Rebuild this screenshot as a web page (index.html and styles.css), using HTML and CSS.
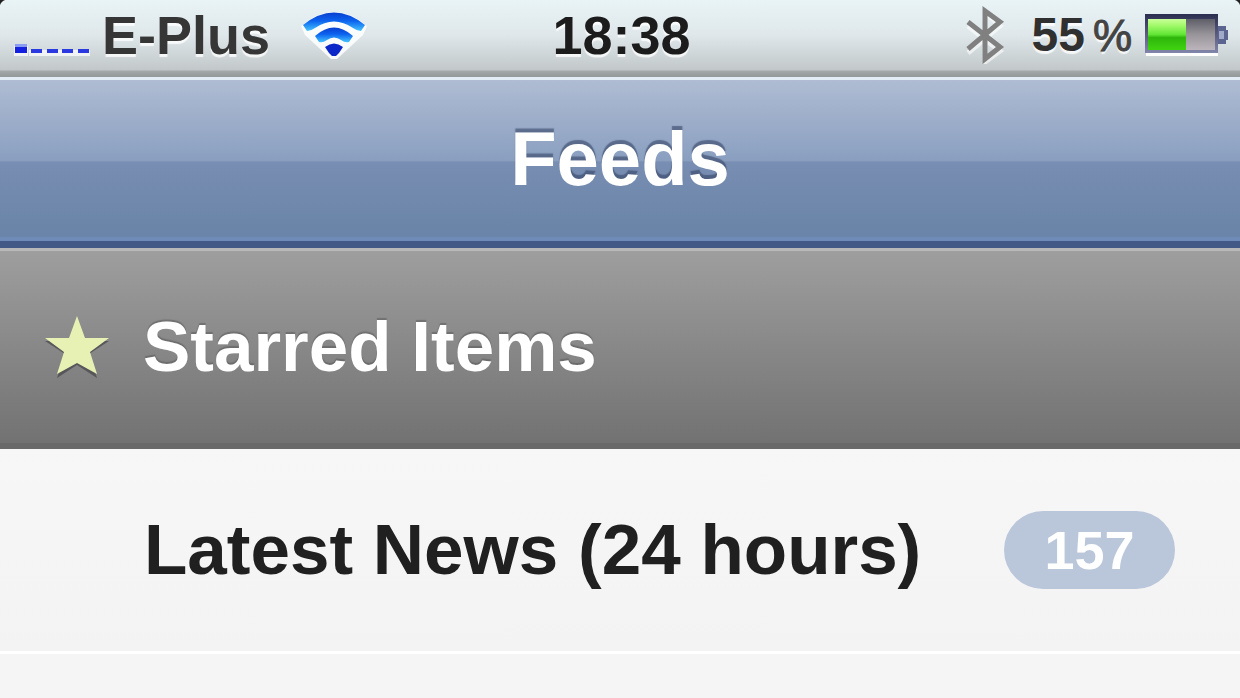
FILE: index.html
```html
<!DOCTYPE html>
<html lang="en">
<head>
    <meta charset="UTF-8">
    <meta name="viewport" content="width=device-width, initial-scale=1.0">
    <title>Feeds</title>
    <link rel="stylesheet" href="styles.css">
</head>
<body>
    <div class="status-bar">
        <div class="status-left">
            <svg class="signal" width="76" height="14" viewBox="0 0 76 14" aria-hidden="true">
                <path d="M0 4h14v10H0zM15 8h61v6H15z" fill="#fff" opacity=".7"/>
                <path d="M1 2h12v4H1z" fill="#8a9df0"/>
                <path d="M1 5h12v6H1z" fill="#1422e0"/>
                <path d="M17 7h11v4H17zM33 7h11v4H33zM48 7h11v4H48zM64 7h11v4H64z" fill="#2b3ae0"/>
            </svg>
            <span class="carrier">E-Plus</span>
            <svg class="wifi" width="66" height="48" viewBox="0 0 66 48" aria-hidden="true">
                <defs>
                    <linearGradient id="arc" x1="0" y1="0" x2="0" y2="1">
                        <stop offset="0" stop-color="#0a3fd0"/>
                        <stop offset=".45" stop-color="#0c62ee"/>
                        <stop offset="1" stop-color="#45c4ff"/>
                    </linearGradient>
                </defs>
                <path d="M0 15Q33-13 66 15L62 24L36 48H30L4 24z" fill="#fff" opacity=".85"/>
                <path d="M2 14Q33-11 64 14L60 20Q56 20 52 17Q33 4 14 17Q10 20 6 20z" fill="url(#arc)"/>
                <path d="M14 25Q33 8 52 25L48 31Q44 32 40 29Q33 24 26 29Q22 32 18 31z" fill="url(#arc)"/>
                <path d="M24 36Q33 29 42 36L38 42L35 45H31L28 42z" fill="#0b27c8"/>
            </svg>
        </div>
        <div class="clock">18:38</div>
        <div class="status-right">
            <svg class="bluetooth" width="40" height="58" viewBox="0 0 40 58" aria-hidden="true">
                <path d="M3 18L35 43L20 54V4L35 18L3 45" fill="none" stroke="#fff" stroke-width="5" opacity=".6" transform="translate(0 2)"/>
                <path d="M3 16L35 41L20 53V5L35 16L3 43" fill="none" stroke="#808080" stroke-width="5"/>
            </svg>
            <span class="charge">55<span class="percent">%</span></span>
            <svg class="battery" width="84" height="44" viewBox="0 0 84 44" aria-hidden="true">
                <defs>
                    <linearGradient id="full" x1="0" y1="0" x2="0" y2="1">
                        <stop offset="0" stop-color="#c9ff9a"/>
                        <stop offset=".2" stop-color="#a4fa6c"/>
                        <stop offset=".5" stop-color="#62e636"/>
                        <stop offset=".6" stop-color="#2fb50c"/>
                        <stop offset="1" stop-color="#3fd410"/>
                    </linearGradient>
                    <linearGradient id="empty" x1="0" y1="0" x2="0" y2="1">
                        <stop offset="0" stop-color="#5e5e68"/>
                        <stop offset=".5" stop-color="#98949a"/>
                        <stop offset="1" stop-color="#bcb6bc"/>
                    </linearGradient>
                    <linearGradient id="frame" x1="0" y1="0" x2="0" y2="1">
                        <stop offset="0" stop-color="#2c2e50"/>
                        <stop offset="1" stop-color="#8286aa"/>
                    </linearGradient>
                </defs>
                <path d="M1 40h72v3H1z" fill="#fff"/>
                <path d="M73 13h8v4h2v10h-2v4h-8z" fill="#5c6490"/>
                <path d="M74 18h5v8h-5z" fill="#a0a9c8"/>
                <path d="M0 1h73v39H0z" fill="url(#frame)"/>
                <path d="M3 6h38v31H3z" fill="url(#full)"/>
                <path d="M41 6h29v31H41z" fill="url(#empty)"/>
            </svg>
        </div>
    </div>

    <header class="nav-bar">
        <h1>Feeds</h1>
    </header>

    <ul class="feed-list">
        <li>
            <a class="row starred" href="#starred">
                <svg class="star" width="68" height="68" viewBox="0 0 68 68" aria-hidden="true">
                    <path d="M34 7L41 28H66L46 41L54 65L34 52L14 65L22 41L2 28H27z" fill="#4c4c50" opacity=".8"/>
                    <path d="M34 3L42 25H66L47 39L54 61L34 50L14 61L21 39L2 25H26z" fill="#e7f1b4"/>
                </svg>
                <span class="title">Starred Items</span>
            </a>
        </li>
        <li>
            <a class="row" href="#latest">
                <span class="title">Latest News (24 hours)</span>
                <span class="badge">157</span>
            </a>
        </li>
    </ul>
</body>
</html>
```

FILE: styles.css
```css
* {
    box-sizing: border-box;
}

body {
    margin: 0;
    min-height: 100vh;
    background: #f5f5f5;
    font-family: "Liberation Sans", Arial, sans-serif;
    font-weight: bold;
    color: #202020;
}

.status-bar {
    display: grid;
    grid-template-columns: 1fr auto 1fr;
    align-items: center;
    height: 80px;
    padding: 0 11px 10px 14px;
    background:
        radial-gradient(circle at 8px 8px, transparent 8px, #222 9px) 0 0 / 8px 8px no-repeat,
        radial-gradient(circle at 0 8px, transparent 8px, #222 9px) 100% 0 / 8px 8px no-repeat,
        linear-gradient(#e9f4f7 0, #dfe7ea 35px, #c2c8ca 70px, #a3a9a9 71px, #929998 77px, #e3edf5 77px, #e3edf5 80px);
    font-size: 54px;
    line-height: 60px;
    text-shadow: 0 3px 1px rgba(255, 255, 255, 0.8);
}

.status-left,
.status-right {
    display: flex;
    align-items: center;
}

.status-right {
    justify-content: flex-end;
}

.signal {
    margin-top: 28px;
    margin-right: 12px;
}

.carrier {
    color: #363636;
}

.wifi {
    margin-left: 31px;
}

.clock {
    color: #1c1c1c;
}

.bluetooth {
    margin-right: 26px;
}

.charge {
    display: flex;
    align-items: baseline;
    font-size: 48px;
    color: #303030;
}

.percent {
    margin: 0 13px 0 8px;
    font-size: 44px;
    font-weight: normal;
    color: #444;
    -webkit-text-stroke: 1px #444;
}

.nav-bar {
    display: flex;
    align-items: center;
    justify-content: center;
    height: 168px;
    padding-bottom: 4px;
    border-bottom: 7px solid #435a86;
    background: linear-gradient(#afbcd3, #8a9fc0 50%, #788eb2 51%, #6984a8 97%, #6f8cb9 98%);
}

.nav-bar h1 {
    margin: 0;
    font-size: 76px;
    line-height: 80px;
    color: #fff;
    text-shadow: 0 -4px 1px rgba(52, 66, 100, 0.6);
}

.feed-list {
    margin: 0;
    padding: 0;
    list-style: none;
}

.row {
    display: flex;
    align-items: center;
    height: 205px;
    padding: 0 65px 0 144px;
    border-bottom: 3px solid #fff;
    background: linear-gradient(#f7f7f7, #f3f3f3);
    color: inherit;
    text-decoration: none;
}

.title {
    flex: 1;
    font-size: 71px;
    line-height: 80px;
}

.starred {
    height: 201px;
    padding-left: 43px;
    border-top: 3px solid #b9b9b9;
    border-bottom: 6px solid #696969;
    background: linear-gradient(#9e9e9e, #727272);
    color: #fff;
    text-shadow: 0 -2px 1px rgba(70, 70, 70, 0.4);
}

.star {
    margin-right: 32px;
}

.badge {
    min-width: 171px;
    border-radius: 39px;
    background: #bac6da;
    color: #fff;
    font-size: 54px;
    line-height: 78px;
    text-align: center;
}
```
